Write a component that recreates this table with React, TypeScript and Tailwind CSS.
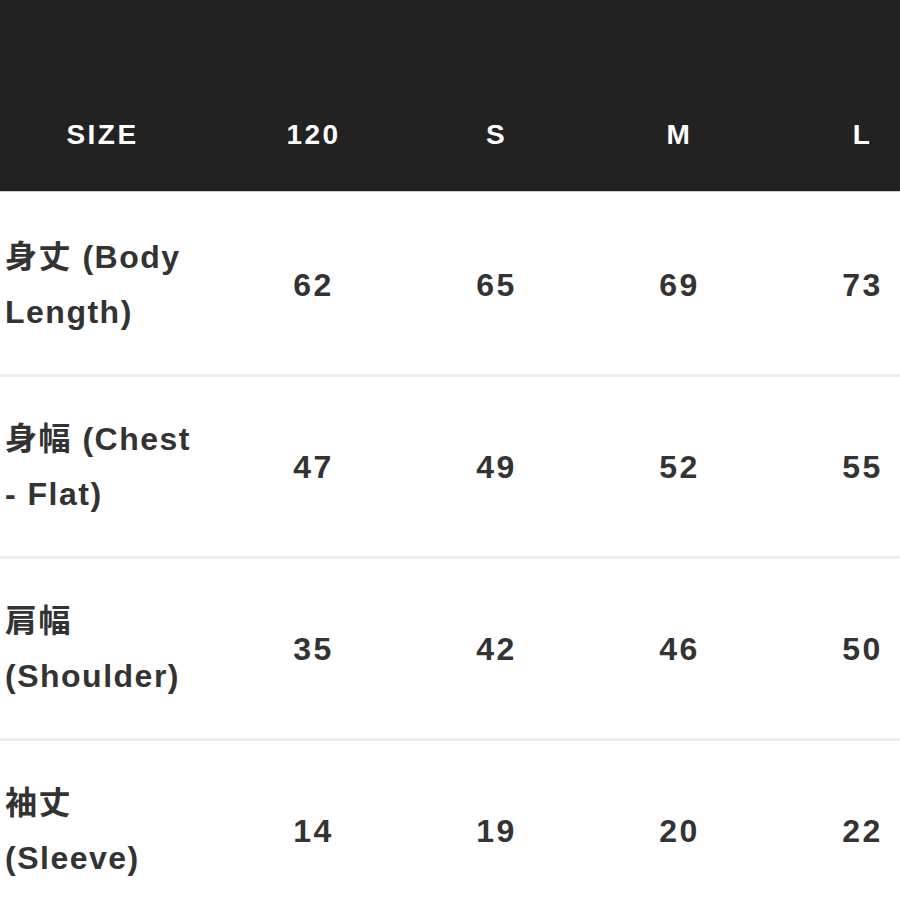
import React from "react";

const heads = ["120", "S", "M", "L"];
const rows: { label: string; vals: string[] }[] = [
  { label: "身丈 (Body Length)", vals: ["62", "65", "69", "73"] },
  { label: "身幅 (Chest - Flat)", vals: ["47", "49", "52", "55"] },
  { label: "肩幅 (Shoulder)", vals: ["35", "42", "46", "50"] },
  { label: "袖丈 (Sleeve)", vals: ["14", "19", "20", "22"] },
];

const font = {
  fontFamily: '"Liberation Sans", "Noto Sans CJK JP", Arial, sans-serif',
};

export default function App() {
  return (
    <div className="w-[900px] h-[900px] overflow-hidden bg-white" style={font}>
      <div className="w-[954px]">
        <div className="grid grid-cols-[222px_183px_183px_183px_183px] h-[192px] bg-[#222222] pt-[78px] text-white font-bold text-[28px] tracking-[2.5px] border-b border-[#cfcfcf]">
          <div className="flex items-center justify-center pl-[5px] pr-[22px]">SIZE</div>
          {heads.map((h) => (
            <div key={h} className="flex items-center justify-center">
              {h}
            </div>
          ))}
        </div>
        <div className="h-[3px]" />
        {rows.map((r) => (
          <div
            key={r.label}
            className="grid grid-cols-[222px_183px_183px_183px_183px] h-[182px] border-b-[3px] border-[#eeeeee] text-[#333333] font-bold text-[32px] tracking-[1.5px]"
          >
            <div className="flex items-center pl-[5px] pr-[22px]">
              <div className="w-[195px] leading-[55px]">{r.label}</div>
            </div>
            {r.vals.map((v, i) => (
              <div key={i} className="flex items-center justify-center tracking-[2.5px]">
                {v}
              </div>
            ))}
          </div>
        ))}
      </div>
    </div>
  );
}
